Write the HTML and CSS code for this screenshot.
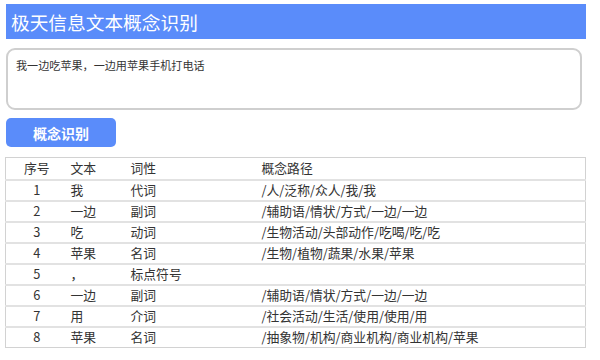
FILE: index.html
```html
<!DOCTYPE html>
<html lang="zh">
<head>
<meta charset="utf-8">
<title>极天信息文本概念识别</title>
<link rel="stylesheet" href="styles.css">
</head>
<body>
<div class="page">
  <div class="header">极天信息文本概念识别</div>
  <textarea class="input">我一边吃苹果，一边用苹果手机打电话</textarea>
  <button class="btn">概念识别</button>
  <table class="result">
    <colgroup>
      <col class="c1"><col class="c2"><col class="c3"><col class="c4">
    </colgroup>
    <tr><th class="num">序号</th><th>文本</th><th>词性</th><th>概念路径</th></tr>
    <tr><td class="num">1</td><td>我</td><td>代词</td><td>/人/泛称/众人/我/我</td></tr>
    <tr><td class="num">2</td><td>一边</td><td>副词</td><td>/辅助语/情状/方式/一边/一边</td></tr>
    <tr><td class="num">3</td><td>吃</td><td>动词</td><td>/生物活动/头部动作/吃喝/吃/吃</td></tr>
    <tr><td class="num">4</td><td>苹果</td><td>名词</td><td>/生物/植物/蔬果/水果/苹果</td></tr>
    <tr><td class="num">5</td><td>，</td><td>标点符号</td><td></td></tr>
    <tr><td class="num">6</td><td>一边</td><td>副词</td><td>/辅助语/情状/方式/一边/一边</td></tr>
    <tr><td class="num">7</td><td>用</td><td>介词</td><td>/社会活动/生活/使用/使用/用</td></tr>
    <tr><td class="num">8</td><td>苹果</td><td>名词</td><td>/抽象物/机构/商业机构/商业机构/苹果</td></tr>
  </table>
</div>
</body>
</html>
```
FILE: styles.css
```css
* { box-sizing: border-box; }
html, body { margin: 0; padding: 0; background: #fff; }
body {
  font-family: "Noto Sans CJK SC", "Noto Sans", sans-serif;
  color: #333;
}
.page {
  padding: 4px 0 0 5px;
  display: flex;
  flex-direction: column;
  align-items: flex-start;
}
.header {
  margin-left: 1px;
  width: 580px;
  height: 35px;
  background: #5a8cfa;
  color: #fff;
  font-size: 18.7px;
  line-height: 35px;
  padding-left: 5px;
}
.input {
  display: block;
  margin: 9px 0 0 1px;
  width: 576px;
  height: 62px;
  border: 2px solid #cfcfcf;
  border-radius: 9px;
  padding: 7px 8px;
  font-family: "Noto Sans CJK SC", sans-serif;
  font-size: 11.1px;
  line-height: 16px;
  color: #333;
  resize: none;
  outline: none;
}
.btn {
  margin: 8px 0 0 1px;
  width: 110px;
  height: 29px;
  border: none;
  border-radius: 5px;
  background: #5a8cfa;
  color: #fff;
  font-family: "Noto Sans CJK SC", sans-serif;
  font-weight: bold;
  font-size: 14px;
  padding: 0;
}
.result {
  margin-top: 10px;
  width: 581px;
  border-collapse: collapse;
  table-layout: fixed;
  border: 1px solid #d2d2d2;
  font-size: 12.8px;
  color: #333;
}
.c1 { width: 62px; }
.c2 { width: 60px; }
.c3 { width: 131px; }
.result th, .result td {
  font-weight: normal;
  text-align: left;
  padding: 0 0 1px 3px;
  height: 20.6px;
  line-height: 18px;
  border-bottom: 2px solid #e2e2e2;
  white-space: nowrap;
}
.result tr:first-child th { height: 22px; }
.result tr:last-child td { border-bottom: 1px solid #d2d2d2; }
.result .num { text-align: center; padding: 0 0 1px 0; }
```
